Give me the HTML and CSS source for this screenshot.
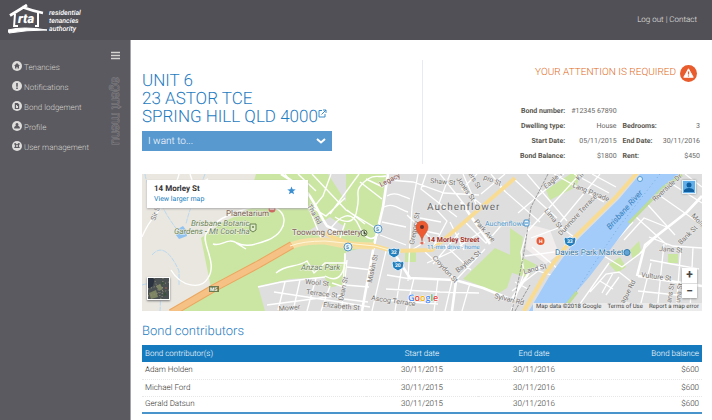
FILE: index.html
```html
<!DOCTYPE html>
<html lang="en">
<head>
<meta charset="utf-8">
<meta name="viewport" content="width=device-width, initial-scale=1">
<title>RTA - Tenancy details</title>
<link rel="stylesheet" href="styles.css">
</head>
<body>
<header class="topbar">
  <a class="brand" href="#">
    <svg class="brand-house" viewBox="0 0 40 32" aria-hidden="true">
      <path d="M2 11.500Q11 6 19 1M14 3Q25 7 35 9" fill="none" stroke="#fff" stroke-width="2.800"/>
      <path d="M7 10L6 23M30 9L30 22M6 22h4M27 22h4" fill="none" stroke="#fff" stroke-width="2"/>
      <path d="M0 26Q15 22 39 26 Q18 26 1 29Z" fill="#fff" stroke="#fff"/>
      <text class="brand-rta" x="10" y="19">rta</text>
    </svg>
    <span class="brand-name">residential<br>tenancies<br>authority</span>
  </a>
  <nav class="account"><a href="#">Log out</a> | <a href="#">Contact</a></nav>
</header>
<div class="shell">
  <aside class="sidebar">
    <nav class="menu">
      <a href="#"><svg viewBox="0 0 10 10" aria-hidden="true"><circle cx="5" cy="5" r="5"/><path class="mark" d="M2 5L5 2l3 3H7v2.500H5.500V6h-1v1.500H3V5z"/></svg><span>Tenancies</span></a>
      <a href="#"><svg viewBox="0 0 10 10" aria-hidden="true"><circle cx="5" cy="5" r="5"/><path class="mark" d="M4.200 2h1.600v3.800H4.200zM4.200 6.600h1.600V8H4.200z"/></svg><span>Notifications</span></a>
      <a href="#"><svg viewBox="0 0 10 10" aria-hidden="true"><circle cx="5" cy="5" r="5"/><path class="mark" d="M2.800 2h3l1.400 1.500V8H2.800z"/><path d="M4 4h1v1h1v2H4z"/></svg><span>Bond lodgement</span></a>
      <a href="#"><svg viewBox="0 0 10 10" aria-hidden="true"><circle cx="5" cy="5" r="5"/><path class="mark" d="M5 2a1.500 1.500 0 0 1 1 2.600L7.800 6v1.500H2.200V6L4 4.600A1.500 1.500 0 0 1 5 2z"/></svg><span>Profile</span></a>
      <a href="#"><svg viewBox="0 0 10 10" aria-hidden="true"><circle cx="5" cy="5" r="5"/><path class="mark" d="M2 2.500l1.500-.5L5 3.500 6.500 2 8 2.500 6.800 5 8 7H2l1.200-2z"/><circle cx="5" cy="5" r="1"/></svg><span>User management</span></a>
    </nav>
    <div class="rail">
      <button class="toggle" type="button" aria-label="Toggle menu"><svg viewBox="0 0 9 9" aria-hidden="true"><path d="M0 1.500h9M0 4.500h9M0 7.500h9"/></svg></button>
      <span class="rail-title">agent menu</span>
    </div>
  </aside>
  <main class="content">
    <section class="summary">
      <div class="property">
        <h1>UNIT 6<br>23 ASTOR TCE<br>SPRING HILL QLD 4000 <a href="#" aria-label="Open property"><svg viewBox="0 0 9 9" aria-hidden="true"><path d="M4 1.500H1V8h6V5M5 1h3v3M8 1L3.500 5.500"/></svg></a></h1>
        <div class="action">
          <select aria-label="I want to"><option>I want to...</option></select>
          <svg viewBox="0 0 10 6" aria-hidden="true"><path d="M1 1l4 3.500L9 1"/></svg>
        </div>
      </div>
      <div class="details">
        <p class="alert">YOUR ATTENTION IS REQUIRED
          <svg viewBox="0 0 18 18" aria-hidden="true"><circle cx="9" cy="9" r="9" fill="#e85c2d"/><path d="M9 4L14 13H4z" fill="#fff" stroke="#fff" stroke-linejoin="round"/><path d="M9 7v3M9 11v1.200" stroke="#e85c2d" stroke-width="1.300"/></svg>
        </p>
        <table class="facts">
          <tr><th scope="row">Bond number:</th><td>#12345 67890</td><th></th><td></td></tr>
          <tr><th scope="row">Dwelling type:</th><td>House</td><th scope="row">Bedrooms:</th><td>3</td></tr>
          <tr><th scope="row">Start Date:</th><td>05/11/2015</td><th scope="row">End Date:</th><td>30/11/2016</td></tr>
          <tr><th scope="row">Bond Balance:</th><td>$1800</td><th scope="row">Rent:</th><td>$450</td></tr>
        </table>
      </div>
    </section>

    <section class="map" aria-label="Map">
      <svg class="map-canvas" viewBox="142 174 560 137" preserveAspectRatio="xMidYMid slice">
        <path fill="#dedede" d="M142 174h560v137H142z"/>
        <path fill="#e9e7df" d="M142 174h130l-20 46-40 70-40 21h-30z"/>
        <path fill="#cbe6a3" d="M201 238L223 222 245 212 256 174H386L381 212 374 245 346 252V284L328 288 325 277 290 279 258 286 265 311H172L211 288z"/>
        <path fill="#dedede" d="M303 174h25l18 28v-28h10v-2zM310 230l20-13 15 10-15 16z"/>
        <path fill="#cbe6a3" d="M405 252h11v10h-11zM463 279l32-31 22 10-10 30-8 5zM510 228l13 9-2 20 16 8-10 13-17-6zM546 190l26-17h9l-5 14-26 13zM630 250l9-9 2 10-8 9zM609 264l11-7 6 10-9 6zM668 254h10v9h-10z"/>
        <path fill="#f1eded" d="M528 224l22 6 9 24-13 10-20-15z"/>
        <path fill="#8fc2f1" d="M178 229l5-3 3 4 1 6-8 3-3-4z"/>
        <g fill="none" stroke="#bad8f2" stroke-dasharray="5 1">
          <path d="M145 174c2 15 10 16 13 22s4 14 20 35M152 255c10-12 20 0 27 16v14M142 285c15-5 20 5 18 26M205 174c-7 20-14 28-19 50"/>
        </g>
        <g fill="none" stroke="#fff" stroke-width="1.400">
          <path d="M171 270c10 17 30 20 37 8 10-15-7-35-2-44 9-18 40-26 54-28 30-3 31 25 8 34-18 7-25 6-31 3-10-6-15 4-24 1M236 243l10 6M142 237c8-20 17-24 24-36s12-20 13-27M190 174l4 12 14-7M276 273c10-9 20-5 31-12l7 12 11-10h21"/>
          <path d="M285 174l24 34 12 30M298 174l18 17M312 174l34 36 28 17M331 174l-8 22-10 12 13 8 19-18M330 214l29-40M335 217c10 6 20 8 22-8 4-17-4-16 7-27 10-9 14-4 22-6M327 234c13-21 25-24 32-8s15 14 19 8M347 210l18 14M360 182l22 17M366 179l17 8M345 223l-7 21M325 276c16 9 21-7 20-22M332 283l12 4 3-27"/>
          <path d="M258 287l23-5 44-5M274 292l53 8 43 7M285 282l-7 28M300 280l-7 31M316 278l-9 33M330 286l-9 25M267 305l76-10M345 286l-4 25M345 253l-2 34M347 267l25 3M345 285l24 2M344 299l24 3"/>
        </g>
        <g fill="none" stroke="#fff" stroke-width="1.300">
          <path d="M389 180l24 2 31 11 35 2M387 196c8-5 15 0 23 3M384 207c9-5 16 3 24 5M382 222l24 5M380 235l26 10M426 174l-5 15 36 28M418 174l-6 33-2 34-2 40M450 174l-12 32M432 205l15 16-15 28M440 174l28 35M463 174l13 30M477 174l-15 15 25 20M505 174l-24 20M491 174l14 17M420 218l21 4M420 230l19 4M407 215l33 32M425 242l-15 9M427 263l24-11 31-21M425 252l31 28 29-31M445 245l26 25M433 264l26-31M466 223l20 20 19-22M414 278l-8 33M438 279l-4 32M452 281l-7 30M470 283l-8 28M387 275l24 4M386 289l54 3 39 1M384 300l54 4M386 251l-14 60M402 266l-7 45M450 222l14 28"/>
          <path d="M500 187l40 35M515 180l42 38M527 174l40 47M554 174l50 28M574 174l35 19M592 174l24 13M564 174l-46 39M580 174l-52 57M600 174l-43 52M531 238l30-11 14 11M525 256l37-5 8-15M532 247l26 22M512 291l26-20 13 4M515 282l13 7M530 222l-9 30 3 21-13 38"/>
          <path d="M590 292l16-18 13-2 14 11M600 281l13 8M613 273l-11 20M619 277l-13 18M604 256l10-13 19-21M604 256l18 11 20-15M624 240l20-22 25 10M636 217l31 28M648 205l27 30M659 195l43 30M672 184l30 19M685 174l17 13M640 253l20-20M649 237l24 9 29 2M650 260l49 9M645 277l57 9M638 291l58 6M625 303l66 8M651 263l-12 48M664 244l-7 67M681 246l-5 65M693 247l-3 64M575 311l34-48"/>
        </g>
        <g fill="none" stroke="#fff" stroke-width="2.600">
          <path d="M281 174l22 14c10 8 16 27 24 38l18 9M388 174l-5 33-9 38-12 66M392 250l18 28 45 2 28 8 32 13M456 281l-4 30M461 202l29 42M510 302l20-31 15-5M702 196l-15 16-42 33-8 31M638 276l64 10"/>
        </g>
        <g fill="none" stroke-linejoin="round">
          <path stroke="#f5dfa5" stroke-width="7" d="M287 248q12-8 38-7l20 4 29 1"/>
          <path stroke="#f9dc94" stroke-width="4" d="M325 233q22 13 50 13l18 5 39-1 83-72M637 173l-22 25-47 46-23 30-21 37"/>
          <path stroke="#eba761" stroke-width="8" d="M171 313l43-25 45-24 33-19"/>
          <path stroke="#f6c184" stroke-width="6" d="M171 313l43-25 45-24 33-19"/>
          <path stroke="#fff5d8" d="M325 241l50 5 18 5M290 246q13-5 35-5"/>
        </g>
        <path fill="#a3ccfa" d="M640 174L619 199 572 245 549 277 529 311H560L590 276 613 246 638 213 679 174z"/>
        <path fill="none" stroke="#79acdc" stroke-dasharray="1 3" d="M660 174l-42 54-28 42-26 41"/>
        <path fill="none" stroke="#bddc98" stroke-width="3" d="M629 223l35-36 18-12M565 307l12-15"/>
        <path fill="none" stroke="#999" stroke-dasharray="3 1" d="M548 174l-17 33-8 51-11 53M515 311l15-26"/>

        <g class="road-label">
          <text transform="translate(155 221) rotate(-70)">Sir S</text>
          <text transform="translate(307 206) rotate(60)">Tha Rd</text>
          <text transform="translate(305 284) rotate(5)">Wool St</text>
          <text transform="translate(306 294) rotate(7)">Terrace St</text>
          <text transform="translate(279 311) rotate(-5)">Mower</text>
          <text transform="translate(323 307) rotate(5)">Elizabeth St</text>
          <text transform="translate(343 301) rotate(-78)">Dean St</text>
          <text transform="translate(372 283) rotate(-78)">Miskin St</text>
          <text class="road-red" transform="translate(381 187) rotate(-27)">Legacy</text>
          <text transform="translate(430 183) rotate(5)">Shaw St</text>
          <text transform="translate(456 179) rotate(55)">Jones St</text>
          <text transform="translate(468 174) rotate(58)">ers St</text>
          <text transform="translate(483 179) rotate(22)">pro St</text>
          <text transform="translate(414 245) rotate(-80)">Gregory St</text>
          <text transform="translate(474 222) rotate(48)">Park Ave</text>
          <text transform="translate(432 258) rotate(48)">Croydon St</text>
          <text transform="translate(458 273) rotate(-40)">Bayliss St</text>
          <text transform="translate(371 300) rotate(8)">Ascog Terrace</text>
          <text transform="translate(494 298) rotate(14)">Sylvan Rd</text>
          <text transform="translate(546 189) rotate(-40)">Eagle T</text>
          <text transform="translate(579 181) rotate(-50)">Kil</text>
          <text transform="translate(572 187) rotate(22)">Lang Parade</text>
          <text transform="translate(544 211) rotate(50)">Lima St</text>
          <text transform="translate(561 236) rotate(-47)">Dunmore Terrace</text>
          <text transform="translate(524 274) rotate(-14)">Land St</text>
          <text transform="translate(655 202) rotate(-43)">Riverside Dr</text>
          <text transform="translate(691 216) rotate(48)">Mollison</text>
          <text transform="translate(681 245) rotate(-45)">Bank St</text>
          <text transform="translate(659 251) rotate(4)">Jane St</text>
          <text transform="translate(641 277) rotate(7)">Vulture St</text>
          <text transform="translate(623 306) rotate(-62)">tague Rd</text>
          <text transform="translate(671 303) rotate(-80)">ans St</text>
          <text transform="translate(680 303) rotate(-82)">una St</text>
        </g>
        <text class="place olive" x="226" y="216">Planetarium</text>
        <text class="place green" x="191" y="226">Brisbane Botanic</text>
        <text class="place green" x="174" y="234">Gardens - Mt Coot-tha</text>
        <text class="place olive" x="292" y="235">Toowong Cemetery</text>
        <text class="place green" x="301" y="270">Anzac Park</text>
        <text class="suburb" x="427" y="210">Auchenflower</text>
        <text class="place station" x="485" y="226">Auchenflower</text>
        <text class="place market" x="555" y="255">Davies Park Market</text>
        <text class="river" transform="translate(610 230) rotate(-48)">Brisbane River</text>
        <circle cx="272" cy="209" r="3.500" fill="#ce6862"/><path stroke="#fff" d="M270 209h4"/>
        <path fill="#ddebc8" stroke="#68824e" d="M250 224h6v6l-3 2-3-2z"/><circle cx="253" cy="227" r="1" fill="#68824e"/>
        <circle cx="364" cy="233" r="3" fill="#dfe8d0" stroke="#647453"/><path stroke="#647453" d="M364 231v3h2"/>
        <g fill="#eaf4fc" stroke="#5896c8"><circle cx="348" cy="247" r="4"/><circle cx="378" cy="229" r="4"/></g>
        <text class="tiny blue" x="346" y="249">5</text><text class="tiny blue" x="376" y="231">5</text>
        <path fill="#6c7a50" d="M209 286h10v6h-10z"/><text class="tiny" x="210" y="291">M5</text>
        <g fill="#247fbd" stroke="#e3effa"><path id="shield" d="M389 248l2 1 3-1 3 1 2-1 1 2-1 5-5 3-5-3-1-5z"/><use href="#shield" x="4" y="13"/><use href="#shield" x="176" y="-11"/></g>
        <text class="tiny" x="391" y="254">32</text><text class="tiny" x="395" y="267">20</text><text class="tiny" x="567" y="243">33</text>
        <rect x="524" y="220" width="5" height="6" rx="1" fill="#edf6ff" stroke="#388ac7"/><path stroke="#388ac7" d="M525 223h3"/>
        <circle cx="540.500" cy="241" r="4" fill="#e75b36"/><text class="tiny" x="539" y="243">H</text>
        <circle cx="627" cy="252.500" r="3" fill="#65a4d4" stroke="#337ab0"/>
        <circle cx="640" cy="179" r="2.500" fill="#e0f1ff" stroke="#559ccf"/>
        <path d="M422 241c-1-7-6-8-6-14a6 6 0 0 1 12 0c0 6-5 7-6 14z" fill="#ec5b32" stroke="#cb4c29" stroke-width=".5"/>
        <circle cx="422" cy="227" r="2" fill="#63312a"/><circle cx="422" cy="243" r="1.600" fill="#e46a55"/>
        <text class="pin-title" x="427" y="242">14 Morley Street</text>
        <text class="pin-note" x="427" y="249">11-min drive - home</text>
        <text class="google" x="408" y="301"><tspan fill="#4285f4">G</tspan><tspan fill="#ea4335">o</tspan><tspan fill="#f4b400">o</tspan><tspan fill="#4285f4">g</tspan><tspan fill="#34a853">l</tspan><tspan fill="#ea4335">e</tspan></text>
      </svg>
      <div class="map-card">
        <div><strong>14 Morley St</strong><a href="#">View larger map</a></div>
        <svg viewBox="0 0 10 10" aria-hidden="true"><path fill="#3b8ed0" d="M5 .5l1.200 3.200 3.500.1-2.800 2.100 1 3.400L5 7.400 2.100 9.300l1-3.400L.3 3.800l3.500-.1z"/></svg>
      </div>
      <button class="satellite" type="button" aria-label="Satellite view"><svg viewBox="0 0 21 21" aria-hidden="true"><path fill="#4b5153" d="M0 0h21v21H0z"/><path fill="#2b3340" d="M0 0h7l-2 8-5 3z"/><path d="M1 15l7-3 2 7-7 2zM8 8l4-2 3 5-4 2z" fill="#7e8563"/><path d="M0 11l21-7M6 0l7 21M0 18l21-6M15 0l-1 21" stroke="#94927a" stroke-dasharray="1 2"/><path d="M13 3l3 2-2 3zM17 14l2 3-4 1z" fill="#39533b"/><path stroke="#b15e51" d="M17 10h2"/></svg></button>
      <button class="person" type="button" aria-label="Account"><svg viewBox="0 0 12 12" aria-hidden="true"><path fill="#62aee8" d="M0 0h12v12H0z"/><circle cx="6" cy="4" r="2.500" fill="#0e5d9f"/><path fill="#0e5d9f" d="M1 11V9q2-2 5-2t5 2v2z"/></svg></button>
      <div class="zoom"><button type="button" aria-label="Zoom in">+</button><button type="button" aria-label="Zoom out">−</button></div>
      <div class="credits"><span>Map data ©2018 Google</span><a href="#">Terms of Use</a><a href="#">Report a map error</a></div>
    </section>

    <section>
      <h2>Bond contributors</h2>
      <table class="contributors">
        <thead><tr><th scope="col">Bond contributor(s)</th><th scope="col">Start date</th><th scope="col">End date</th><th scope="col">Bond balance</th></tr></thead>
        <tbody>
          <tr><td>Adam Holden</td><td>30/11/2015</td><td>30/11/2016</td><td>$600</td></tr>
          <tr><td>Michael Ford</td><td>30/11/2015</td><td>30/11/2016</td><td>$600</td></tr>
          <tr><td>Gerald Datsun</td><td>30/11/2015</td><td>30/11/2016</td><td>$600</td></tr>
        </tbody>
      </table>
    </section>
  </main>
</div>
</body>
</html>
```
FILE: styles.css
```css
* { box-sizing: border-box; }
body {
  margin: 0;
  min-height: 100vh;
  display: flex;
  flex-direction: column;
  background: #fff;
  color: #555;
  font: 300 8px/12px Roboto, sans-serif;
  text-rendering: geometricPrecision;
}
a { color: inherit; text-decoration: none; }
button { border: 0; padding: 0; font: inherit; cursor: pointer; }
svg { display: block; flex: none; }

.topbar {
  display: flex;
  justify-content: space-between;
  align-items: flex-start;
  height: 40px;
  padding: 4px 15px 0 8px;
  background: #515057;
  color: #eee;
}
.brand { display: flex; gap: 1px; }
.brand-house { width: 40px; height: 32px; }
.brand-rta { fill: #fff; font: italic 900 13px Roboto, sans-serif; }
.brand-name { padding-top: 5px; font: italic 500 7px/8px Roboto, sans-serif; color: #fff; }
.account { padding-top: 10px; font-weight: 300; color: #e8e7e2; }

.shell { flex: 1; display: flex; }
.sidebar {
  flex: 0 0 131px;
  display: flex;
  justify-content: space-between;
  padding: 11px 9px 0 12px;
  background: #5b5a60;
  border-right: 1px solid #a5a5a8;
  color: #d4d3cd;
}
.menu { display: flex; flex-direction: column; gap: 8px; padding-top: 10px; }
.menu a { display: flex; gap: 2px; white-space: nowrap; line-height: 14px; height: 12px; }
.menu svg { width: 10px; height: 10px; fill: #dedddb; }
.menu .mark { fill: #5b5a60; }
.rail { width: 12px; flex: none; display: flex; flex-direction: column; align-items: center; gap: 17px; }
.toggle { background: none; }
.toggle svg { width: 9px; height: 9px; stroke: #d5d4d1; stroke-width: 1.5px; }
.rail-title {
  writing-mode: vertical-rl;
  font-size: 13px;
  line-height: 14px;
  color: #5b5a60;
  -webkit-text-stroke: 1px #858489;
  paint-order: stroke fill;
}

.content { flex: 1; min-width: 0; padding: 20px 10px 0 11px; }
.summary { display: flex; height: 104px; margin-bottom: 10px; }
.property { flex: 1; padding-top: 12px; }
h1 { margin: 0 0 5px; font-size: 17px; line-height: 18px; font-weight: 300; color: #1f7cc0; }
h1 a { display: inline-block; margin-left: -4px; vertical-align: 4px; }
h1 svg { width: 9px; height: 9px; fill: none; stroke: #3b8bc8; }
.action { display: grid; width: 190px; align-items: center; }
.action > * { grid-area: 1 / 1; }
.action select {
  appearance: none;
  width: 100%;
  height: 20px;
  padding: 0 6px;
  border: 0;
  border-radius: 0;
  background: #5899d0;
  color: #fff;
  font: 300 10px Roboto, sans-serif;
  text-rendering: inherit;
}
.action svg { justify-self: end; width: 10px; height: 6px; margin-right: 6px; fill: none; stroke: #fff; stroke-width: 2px; pointer-events: none; }
.details { flex: 1; display: flex; flex-direction: column; align-items: flex-end; border-left: 1px solid #e5ebef; }
.alert { display: flex; align-items: center; gap: 4px; margin: 4px 5px 22px 0; font-size: 10px; line-height: 18px; color: #e06a1d; white-space: nowrap; }
.alert svg { width: 17px; height: 17px; }
.facts { border-collapse: collapse; margin-right: 2px; font-size: 7px; line-height: 15px; white-space: nowrap; }
.facts th, .facts td { padding: 0 0 0 6px; text-align: right; font-weight: 400; }
.facts th { font-weight: 700; color: #59574f; }
.facts td { color: #66655f; }
.facts th:nth-child(3) { text-align: left; }
.facts td:last-child { min-width: 42px; }

.map { position: relative; height: 137px; overflow: hidden; }
.map-canvas { width: 100%; height: 100%; }
.map text { font-family: Roboto, sans-serif; }
.road-label text { font-size: 7px; font-weight: 400; fill: #77736e; stroke: #eee; stroke-width: 1px; paint-order: stroke; }
.road-label .road-red { fill: #834c45; }
.map .place { font-size: 8px; font-weight: 400; fill: #546250; stroke: #f2f2ed; stroke-width: 1px; paint-order: stroke; }
.map .olive { fill: #775d50; }
.map .green { font-style: italic; fill: #688052; }
.map .station { font-size: 7px; fill: #4c94cc; }
.map .market { fill: #3177ab; }
.map .suburb { font-size: 10px; font-weight: 400; letter-spacing: 1px; fill: #666; stroke: #e9e9e9; stroke-width: 1px; paint-order: stroke; }
.map .river { font-size: 8px; font-style: italic; font-weight: 400; fill: #367fba; }
.map .tiny { font-size: 5px; font-weight: 700; fill: #fff; }
.map .blue { fill: #397dac; }
.map .pin-title { font-size: 7px; font-weight: 700; fill: #a4332a; stroke: #eee; stroke-width: 1px; paint-order: stroke; }
.map .pin-note { font-size: 6px; font-weight: 400; fill: #3f92d2; stroke: #eee; stroke-width: 1px; paint-order: stroke; }
.map .google { font: 600 9px "Open Sans", sans-serif; stroke: #fff; stroke-width: 1px; paint-order: stroke; }
.map-card {
  position: absolute;
  top: 6px;
  left: 5px;
  width: 161px;
  display: flex;
  justify-content: space-between;
  padding: 4px 12px 4px 7px;
  background: #fff;
  box-shadow: 0 1px 2px #aaa;
  font-size: 7px;
  line-height: 10px;
  font-weight: 400;
}
.map-card strong { display: block; font-size: 8px; font-weight: 700; color: #333; }
.map-card a { color: #247fbd; }
.map-card svg { width: 9px; height: 9px; margin-top: 2px; }
.satellite { position: absolute; left: 5px; bottom: 11px; border: 1px solid #fff; box-shadow: 0 1px 2px #777; }
.satellite svg { width: 21px; height: 21px; }
.person { position: absolute; top: 6px; right: 6px; padding: 1px; background: #e7f2fb; box-shadow: 0 0 2px #888; }
.person svg { width: 12px; height: 12px; }
.zoom { position: absolute; right: 5px; bottom: 13px; width: 15px; display: grid; background: #fff; box-shadow: 0 1px 2px #999; }
.zoom button { height: 15px; background: #fff; color: #444; font-size: 12px; font-weight: 700; line-height: 15px; }
.zoom button + button { border-top: 1px solid #ddd; }
.credits { position: absolute; right: 0; bottom: 0; display: flex; gap: 6px; padding: 0 3px; background: #ebebeb; color: #444; font-size: 6px; line-height: 8px; font-weight: 400; }

h2 { margin: 13px 0 5px; font-size: 13px; line-height: 16px; font-weight: 300; color: #1f7cc0; }
.contributors { width: 100%; table-layout: fixed; border-collapse: collapse; border-bottom: 2px solid #4a94cc; }
.contributors th, .contributors td { height: 17px; padding: 0 3px; text-align: center; font-weight: 300; }
.contributors th { background: #167bbe; color: #fff; }
.contributors td { color: #33322e; border-bottom: 1px dotted #e7e7e7; }
.contributors th:first-child { width: 40%; }
.contributors th:first-child, .contributors td:first-child { text-align: left; }
.contributors th:last-child, .contributors td:last-child { text-align: right; }
```
